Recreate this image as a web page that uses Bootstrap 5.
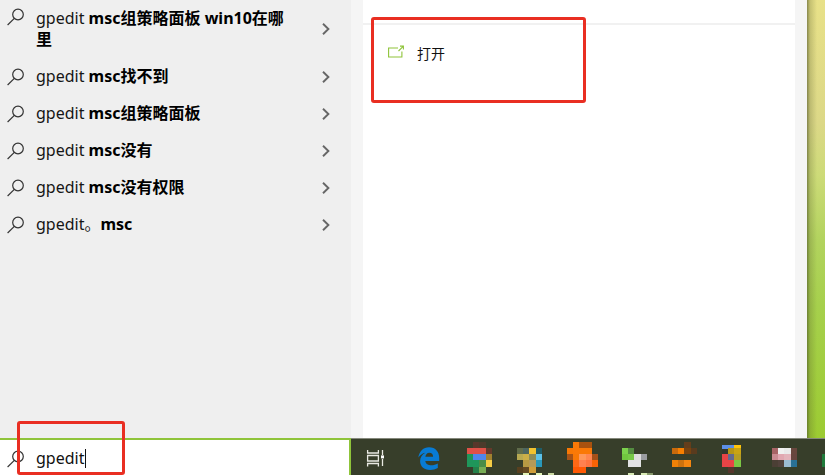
<!DOCTYPE html>
<html lang="zh-CN">
<head>
<meta charset="utf-8">
<meta name="viewport" content="width=device-width, initial-scale=1">
<title>gpedit</title>
<link href="https://cdn.jsdelivr.net/npm/bootstrap@5.3.0/dist/css/bootstrap.min.css" rel="stylesheet">
<style>
  body { font-family: "Noto Sans", "Noto Sans CJK SC", sans-serif; font-size: 16px; line-height: 21px; color: #111; background: #fff; }
  .side { width: 351px; background: #efefef; }
  .suggestion { padding: 8px 21px 8px 7px; color: #161616; text-align: left; }
  .suggestion:hover { background: #e2e2e2; }
  .suggestion .phrase { width: 250px; margin-left: 11px; }
  .suggestion b { font-weight: 700; color: #000; }
  .gutter { width: 12px; background: #f5f5f5; }
  .divider { height: 25px; border-bottom: 2px solid #f1f1f1; }
  .open-action { margin: 18px 0 0 25px; gap: 13px; font-size: 14px; color: #111; }
  .open-action svg { margin-bottom: 4px; }
  .wallpaper { width: 18px; background: linear-gradient(90deg, rgba(70,75,35,.6), rgba(90,95,45,.25) 3px, rgba(90,95,45,0) 10px), linear-gradient(#e8e188, #dcd887 28%, #cddb78 40%, #b2d35e 55%, #a6d04c 70%, #9ccb32); }
  .bottom-bar { height: 37px; }
  .search-box { width: 351px; background: #fff; border: 2px solid #8fc43a; border-width: 2px 2px 0 0; padding: 2px 0 0 7px; }
  .search-box input { width: 49px; margin-left: 11px; outline: 0; color: #111; }
  .caret { width: 1px; height: 19px; background: #111; }
  .taskbar { background: #373e2a; border-top: 1px solid #85887c; }
  .task { width: 51px; }
  .task:first-child { width: 53px; }
  .highlight { border: 3px solid #e92e22; border-radius: 3px; pointer-events: none; }
  .highlight-open { left: 371px; top: 17px; width: 215px; height: 86px; }
  .highlight-search { left: 17px; bottom: 0; width: 108px; height: 54px; }
</style>
<script src="https://cdn.jsdelivr.net/npm/bootstrap@5.3.0/dist/js/bootstrap.bundle.min.js" defer></script>
</head>
<body>
<svg class="d-none" aria-hidden="true">
  <symbol id="lens" viewBox="0 0 18 18"><circle cx="11" cy="6.5" r="5.3" fill="none" stroke="#333" stroke-width="1.2"/><path d="M7.3 10.3 0.6 17" fill="none" stroke="#333" stroke-width="1.2"/></symbol>
  <symbol id="chevron" viewBox="0 0 8 12"><path d="M1 0.8 6.4 6 1 11.2" fill="none" stroke="#666" stroke-width="1.9"/></symbol>
</svg>
<div class="d-flex flex-column vh-100 position-relative overflow-hidden">
  <div class="d-flex flex-grow-1">
    <nav class="side d-flex flex-column flex-shrink-0" aria-label="搜索建议">
      <button class="suggestion border-0 bg-transparent d-flex align-items-center"><svg class="align-self-start flex-shrink-0" width="18" height="18"><use href="#lens"/></svg><span class="phrase">gpedit <b>msc组策略面板 win10在哪里</b></span><svg class="ms-auto" width="8" height="12"><use href="#chevron"/></svg></button>
      <button class="suggestion border-0 bg-transparent d-flex align-items-center"><svg width="18" height="18"><use href="#lens"/></svg><span class="phrase">gpedit <b>msc找不到</b></span><svg class="ms-auto" width="8" height="12"><use href="#chevron"/></svg></button>
      <button class="suggestion border-0 bg-transparent d-flex align-items-center"><svg width="18" height="18"><use href="#lens"/></svg><span class="phrase">gpedit <b>msc组策略面板</b></span><svg class="ms-auto" width="8" height="12"><use href="#chevron"/></svg></button>
      <button class="suggestion border-0 bg-transparent d-flex align-items-center"><svg width="18" height="18"><use href="#lens"/></svg><span class="phrase">gpedit <b>msc没有</b></span><svg class="ms-auto" width="8" height="12"><use href="#chevron"/></svg></button>
      <button class="suggestion border-0 bg-transparent d-flex align-items-center"><svg width="18" height="18"><use href="#lens"/></svg><span class="phrase">gpedit <b>msc没有权限</b></span><svg class="ms-auto" width="8" height="12"><use href="#chevron"/></svg></button>
      <button class="suggestion border-0 bg-transparent d-flex align-items-center"><svg width="18" height="18"><use href="#lens"/></svg><span class="phrase">gpedit。<b>msc</b></span><svg class="ms-auto" width="8" height="12"><use href="#chevron"/></svg></button>
    </nav>
    <div class="gutter flex-shrink-0"></div>
    <main class="flex-grow-1 bg-white">
      <div class="divider"></div>
      <button class="open-action border-0 bg-transparent p-0 d-flex align-items-center">
        <svg width="16" height="14" viewBox="0 0 16 14" fill="none" stroke="#8fc43a" stroke-width="1.1"><path d="M10 3H.6v9h13.3V6.500M10.500 6l4.700-4.700M12 1.100h3.400v3.300"/></svg>
        <span>打开</span>
      </button>
    </main>
    <div class="gutter flex-shrink-0"></div>
    <div class="wallpaper flex-shrink-0"></div>
  </div>
  <div class="bottom-bar d-flex flex-shrink-0">
    <div class="search-box d-flex align-items-center flex-shrink-0">
      <label for="query" class="d-flex"><svg width="18" height="18" role="img" aria-label="搜索"><use href="#lens"/></svg></label>
      <input id="query" type="text" class="border-0 p-0 bg-transparent" value="gpedit" autocomplete="off">
      <span class="caret"></span>
    </div>
    <div class="taskbar d-flex flex-grow-1 overflow-hidden" id="taskbar">
      <button class="task border-0 bg-transparent p-0 d-flex flex-shrink-0" aria-label="任务视图">
        <svg width="53" height="36" viewBox="0 0 53 36" fill="none" stroke="#e8e9e2" stroke-width="1.3"><path d="M16.600 11v3h10.800v-3M16.600 27.500v-3h10.800v3M16.600 16.500h10.800v5.500H16.600zM31.500 11v5M31.500 20v7"/><path d="M30 16.400h3v3h-3z" fill="#fff" stroke="none"/></svg>
      </button>
      <button class="task border-0 bg-transparent p-0 d-flex flex-shrink-0" aria-label="Edge">
        <svg width="51" height="36" viewBox="0 0 51 36"><path fill="#087bd4" d="M14.300 18.500C15.500 12 19.300 8.200 25 8.200c6.800 0 10.200 4.800 10.200 10.800v3H21.300c.4 3 3 4.200 6 4.200 2.400 0 4.500-.7 6.500-1.800v4.600c-2.200 1.300-4.900 1.900-7.700 1.900-6.200 0-10-3.800-10-9 0-3.600 2-6.500 5.200-8.200-2.900.5-5.100 2.300-7 4.800zm7.100-.7h7.700c0-2.700-1.500-4.100-3.800-4.100s-3.600 1.700-3.900 4.100z"/></svg>
      </button>
    </div>
  </div>
  <div class="highlight highlight-open position-absolute"></div>
  <div class="highlight highlight-search position-absolute"></div>
</div>
<script>
  // Pixelated app icons: x offset in the slot, then [row, colours...]; "-" leaves a cell empty.
  const CELL = 6.2;
  const apps = [
    { name: "Chrome", x: 12, rows: [[0, "-", "#58372b", "#4c3b2b"], [1, "#df5148", "#df5148", "#df5148", "#65392b"], [2, "#1f965a", "#4f86ed", "#4f86ed", "#a1812f"], [3, "#1f965a", "#1f965a", "#4b8c48", "#f5cc45"], [4, "-", "#24804a", "#78ad55", "-"]] },
    { name: "应用 1", x: 11, rows: [[1, "#606c4b", "#4d6660", "#f2c32f", "#1f5d69"], [2, "#b7a951", "#cbaf48", "#8d8c58", "#5cc2e9"], [3, "-", "#b89a43", "#b69a58", "#2998ba"], [4, "#58401f", "#654b24", "#d09e3a", "-"], [5, "-", "#e5f5b8", "-", "#e5f5b8", "-", "#cbd9a2"]] },
    { name: "应用 2", x: 10, rows: [[0, "-", "#fa7907", "#a9520f", "#a9520f"], [1, "#f87805", "#fa7907", "#fa7907", "#fa7907"], [2, "#a75317", "#f87805", "#ff985b", "#ff8650", "#a65018"], [3, "-", "#ff6816", "#ff8050", "#ff7440", "#f76306"], [4, "-", "#ff5904", "#ff5904"]] },
    { name: "应用 3", x: 14, rows: [[1, "#7bd14c", "#548d41"], [2, "#70c63f", "#77c948", "#dededf", "#9a9ca0"], [3, "-", "#e2e3e4", "#e2e3e4"], [5, "-", "#d8eab5", "-", "#d8eab5", "#87986b"]] },
    { name: "应用 4", x: 13, rows: [[0, "-", "-", "#643e1b"], [1, "#c96a0c", "#f77f00", "#774310", "#593b1e"], [3, "#ef8107", "#ce720e", "#f58610"]] },
    { name: "应用 5", x: 12, rows: [[0.6, "#5c8fe7", "#5c8fe7", "#ffc50c"], [1, "-", "#b59517", "#c9a413"], [2, "#e84446", "#636a8f", "#b69d24"], [1.1, "#32382e"], [3, "#e84446", "#e84446", "#7cc744"], [2, "#e84446"], [4, "-", "#56352b"]] },
    { name: "应用 6", x: 11, rows: [[1, "#a76466", "#f0f0f0", "#e9e9ea", "#69473e"], [2, "#ca8b92", "#e1a7b1", "#e3b3bb", "#67463f"], [3, "#4b3f35", "#52423c", "#9bbcd2", "#297196"]] },
    { name: "应用 7", x: 10, rows: [[2, "#207b3b"], [3, "#207b3b"]] }
  ];
  const bar = document.getElementById("taskbar");
  for (const app of apps) {
    const cells = app.rows.flatMap(([row, ...colours]) => colours.map((c, i) => c === "-" ? "" :
      `<rect x="${app.x + i * CELL}" y="${2.7 + row * CELL}" width="${CELL}" height="${CELL}" fill="${c}"/>`));
    bar.insertAdjacentHTML("beforeend",
      `<button class="task border-0 bg-transparent p-0 d-flex flex-shrink-0" aria-label="${app.name}"><svg width="51" height="36" viewBox="0 0 51 36" shape-rendering="crispEdges">${cells.join("")}</svg></button>`);
  }
</script>
</body>
</html>
